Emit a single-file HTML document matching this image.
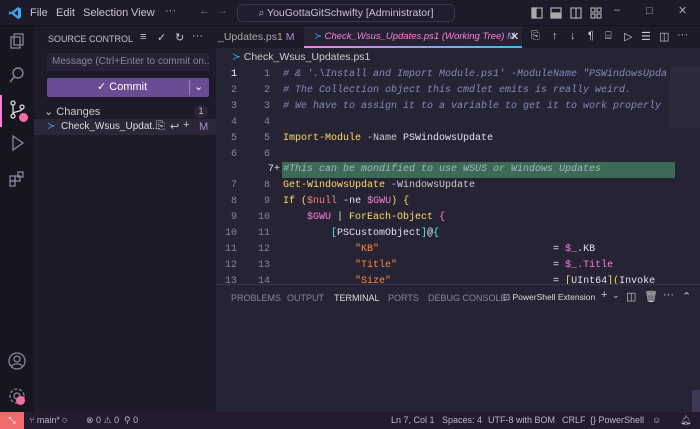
<!DOCTYPE html>
<html><head><meta charset="utf-8"><style>
*{margin:0;padding:0;box-sizing:border-box}
body{width:700px;height:429px;overflow:hidden;background:#262335;font-family:"Liberation Sans",sans-serif;font-size:11px;color:#c8c3d4;position:relative}
.abs{position:absolute;white-space:nowrap}
.title{left:0;top:0;width:700px;height:26px;background:#1e1a29;border-bottom:1px solid #15121d}
.act{left:0;top:26px;width:34px;height:386px;background:#171520}
.side{left:34px;top:26px;width:182px;height:386px;background:#1e1a29}
.tabs{left:216px;top:26px;width:484px;height:22px;background:#1e1a29}
.mono{font-family:"Liberation Mono",monospace;font-size:10px}
.ln{position:absolute;left:216px;width:484px;height:16px;line-height:16px;white-space:pre}
.n1{position:absolute;left:0;width:21px;text-align:right;color:#8a849a}
.n2{position:absolute;left:30px;width:24px;text-align:right;color:#8a849a}
.c{position:absolute;left:67px;color:#e6e0f0}
.cm{color:#848bbd;font-style:italic}
.kw{color:#fede5d}
.pk{color:#ff7edb}
.or{color:#f97e72}
.st{color:#ff8b39}
.bl{color:#36f9f6}
.status{left:0;top:412px;width:700px;height:17px;background:#241b2f;color:#bdb6c9;font-size:9px;line-height:17px}
.panel{left:216px;top:284px;width:484px;height:128px;background:#262335;border-top:1px solid #3a3448}
.ic{position:absolute;color:#ccc;font-size:11px}
</style></head><body>
<div class="abs title">
 <svg class="abs" style="left:8px;top:6px" width="14" height="14" viewBox="0 0 14 14"><path d="M10 1 L13 2.5 V11.5 L10 13 L3 7.5 L1 9 V5 L3 6.5 Z M10 4 L6 7 L10 10 Z" fill="#3da8f5"/></svg>
 <span class="abs" style="left:30px;top:7px">File</span><span class="abs" style="left:56px;top:7px">Edit</span><span class="abs" style="left:83px;top:7px">Selection</span><span class="abs" style="left:131px;top:7px">View</span><span class="abs" style="left:165px;top:5px">···</span>
 <span class="abs" style="left:199px;top:5px;color:#777">←</span><span class="abs" style="left:217px;top:5px;color:#555">→</span>
 <div class="abs" style="left:237px;top:4px;width:218px;height:18px;border:1px solid #3a3448;border-radius:5px;background:#221d2e;text-align:center;line-height:16px;font-size:10.5px">⌕ YouGottaGitSchwifty [Administrator]</div>
 <svg class="abs" style="left:531px;top:7px" width="80" height="12" fill="none" stroke="#aaa" stroke-width="1.2"><rect x="1" y="1" width="10" height="10"/><rect x="1" y="1" width="4" height="10" fill="#aaa"/><rect x="20" y="1" width="10" height="10"/><rect x="20" y="6" width="10" height="5" fill="#aaa"/><rect x="40" y="1" width="10" height="10"/><path d="M45 1V11"/><rect x="60" y="1" width="4" height="4"/><rect x="60" y="7" width="4" height="4"/><rect x="66" y="1" width="4" height="4"/><rect x="66" y="7" width="4" height="4"/></svg>
 <span class="abs" style="left:614px;top:4px;color:#aaa">–</span><span class="abs" style="left:646px;top:5px;color:#aaa">□</span><span class="abs" style="left:678px;top:4px;color:#aaa">✕</span>
</div>
<div class="abs act">
 <div class="abs" style="left:0;top:69px;width:2px;height:32px;background:#ff7edb"></div>
 <svg class="abs" style="left:8px;top:6px" width="18" height="18" fill="none" stroke="#8a849a" stroke-width="1.3"><rect x="6" y="2" width="9" height="11"/><rect x="3" y="5" width="9" height="11"/></svg>
 <svg class="abs" style="left:8px;top:40px" width="18" height="18" fill="none" stroke="#8a849a" stroke-width="1.4"><circle cx="10" cy="7" r="5"/><path d="M6.5 10.5L2 16"/></svg>
 <svg class="abs" style="left:8px;top:74px" width="20" height="20" fill="none" stroke="#ddd" stroke-width="1.3"><circle cx="5" cy="3" r="2"/><circle cx="5" cy="16" r="2"/><circle cx="14" cy="7" r="2"/><path d="M5 5V14M14 9C14 12 5 11 5 14"/></svg>
 <div class="abs" style="left:19px;top:87px;width:9px;height:9px;border-radius:50%;background:#f06ea0"></div>
 <svg class="abs" style="left:8px;top:108px" width="18" height="18" fill="none" stroke="#8a849a" stroke-width="1.3"><path d="M5 2L15 9L5 16Z"/></svg>
 <svg class="abs" style="left:8px;top:144px" width="18" height="18" fill="none" stroke="#8a849a" stroke-width="1.3"><rect x="2" y="6" width="5" height="5"/><rect x="7" y="6" width="5" height="5"/><rect x="2" y="11" width="5" height="5"/><rect x="10" y="2" width="5" height="5"/></svg>
 <svg class="abs" style="left:7px;top:325px" width="20" height="20" fill="none" stroke="#8a849a" stroke-width="1.3"><circle cx="10" cy="10" r="8"/><circle cx="10" cy="8" r="3"/><path d="M4.5 15.5C6 12 14 12 15.5 15.5"/></svg>
 <svg class="abs" style="left:7px;top:360px" width="20" height="20" fill="none" stroke="#8a849a" stroke-width="1.3"><circle cx="10" cy="10" r="3"/><circle cx="10" cy="10" r="7" stroke-dasharray="3 2"/></svg>
 <div class="abs" style="left:16px;top:370px;width:9px;height:9px;border-radius:50%;background:#f06ea0"></div>
</div>
<div class="abs side">
 <span class="abs" style="left:14px;top:8px;font-size:9px">SOURCE CONTROL</span>
 <span class="ic" style="left:106px;top:5px">≡</span><span class="ic" style="left:123px;top:5px">✓</span><span class="ic" style="left:141px;top:5px">↻</span><span class="ic" style="left:158px;top:4px">···</span>
 <div class="abs" style="left:13px;top:27px;width:162px;height:18px;background:#262335;color:#8a849a;font-size:10px;line-height:18px;padding-left:5px;overflow:hidden">Message (Ctrl+Enter to commit on...</div>
 <div class="abs" style="left:13px;top:52px;width:162px;height:19px;background:#6a4c94;color:#fff;line-height:19px;border-radius:2px"><span style="position:absolute;left:50px">✓ Commit</span><span style="position:absolute;left:142px;top:2px;height:15px;border-left:1px solid #9a80c0"></span><span style="position:absolute;left:147px">⌄</span></div>
 <span class="abs" style="left:10px;top:79px;color:#ccc">⌄ Changes</span>
 <div class="abs" style="left:160px;top:79px;width:14px;height:13px;border-radius:7px;background:#2c2638;font-size:9px;text-align:center;line-height:13px">1</div>
 <div class="abs" style="left:0;top:93px;width:182px;height:16px;background:#2b2638"></div>
 <span class="abs" style="left:13px;top:95px;color:#3da8f5;font-size:10px">≻</span>
 <span class="abs" style="left:27px;top:95px;color:#ddd;font-size:10px">Check_Wsus_Updat...</span>
 <span class="ic" style="left:122px;top:94px">⎘</span><span class="ic" style="left:136px;top:94px">↩</span><span class="ic" style="left:149px;top:93px">+</span><span class="abs" style="left:165px;top:95px;color:#a58fd0">M</span>
</div>
<div class="abs tabs">
 <span class="abs" style="left:2px;top:5px;color:#aaa;font-size:10.5px">_Updates.ps1 <span style="color:#a58fd0">M</span></span>
 <div class="abs" style="left:88px;top:0;width:218px;height:22px;background:#262335"></div>
 <div class="abs" style="left:88px;top:20px;width:218px;height:2px;background:linear-gradient(90deg,#ff7edb,#36c2f6)"></div>
 <span class="abs" style="left:98px;top:5px;color:#ff7edb;font-style:italic;font-size:9.5px"><span style="color:#3da8f5;font-style:normal">≻</span> Check_Wsus_Updates.ps1 (Working Tree) <span style="color:#a58fd0">M</span></span>
 <span class="abs" style="left:294px;top:4px;color:#eee">✕</span>
 <span class="ic" style="left:315px;top:4px">⎘</span><span class="ic" style="left:336px;top:4px">↑</span><span class="ic" style="left:354px;top:4px">↓</span><span class="ic" style="left:372px;top:4px">¶</span><span class="ic" style="left:389px;top:4px">⌸</span><span class="ic" style="left:408px;top:4px">▷</span><span class="ic" style="left:425px;top:4px">☰</span><span class="ic" style="left:443px;top:4px">◫</span><span class="ic" style="left:461px;top:3px">···</span>
</div>
<span class="abs" style="left:232px;top:51px;color:#ccc;font-size:10.5px"><span style="color:#3da8f5">≻</span> Check_Wsus_Updates.ps1</span>
<div class="abs" style="left:670px;top:66px;width:30px;height:62px;background:#2e2a3d"></div>
<div class="mono">
<div class="ln" style="top:67px"><span class="n1" style="color:#fff">1</span><span class="n2">1</span><span class="c cm"># &amp; '.\Install and Import Module.ps1' -ModuleName "PSWindowsUpda</span></div>
<div class="ln" style="top:83px"><span class="n1">2</span><span class="n2">2</span><span class="c cm"># The Collection object this cmdlet emits is really weird.</span></div>
<div class="ln" style="top:99px"><span class="n1">3</span><span class="n2">3</span><span class="c cm"># We have to assign it to a variable to get it to work properly</span></div>
<div class="ln" style="top:115px"><span class="n1">4</span><span class="n2">4</span></div>
<div class="ln" style="top:131px"><span class="n1">5</span><span class="n2">5</span><span class="c"><span class="kw">Import-Module</span> <span style="color:#ccc">-Name</span> PSWindowsUpdate</span></div>
<div class="ln" style="top:147px"><span class="n1">6</span><span class="n2">6</span></div>
<div class="ln" style="top:162px"><div style="position:absolute;left:66px;top:0;width:393px;height:16px;background:#3b6a55"></div><span class="n2" style="color:#ddd;left:40px;width:24px">7+</span><span class="c cm" style="color:#a8b0c8">#This can be mondified to use WSUS or Windows Updates</span></div>
<div class="ln" style="top:178px"><span class="n1">7</span><span class="n2">8</span><span class="c"><span class="kw">Get-WindowsUpdate</span> <span style="color:#ccc">-WindowsUpdate</span></span></div>
<div class="ln" style="top:194px"><span class="n1">8</span><span class="n2">9</span><span class="c"><span class="kw">If</span> <span class="kw">(</span><span class="or">$null</span> -ne <span class="pk">$GWU</span><span class="kw">)</span> <span class="kw">{</span></span></div>
<div class="ln" style="top:210px"><span class="n1">9</span><span class="n2">10</span><span class="c">    <span class="pk">$GWU</span> | <span style="color:#fede5d">ForEach-Object</span> <span class="pk">{</span></span></div>
<div class="ln" style="top:226px"><span class="n1">10</span><span class="n2">11</span><span class="c">        <span class="bl">[</span>PSCustomObject<span class="bl">]</span>@<span class="bl">{</span></span></div>
<div class="ln" style="top:242px"><span class="n1">11</span><span class="n2">12</span><span class="c">            <span class="st">"KB"</span>                             = <span class="pk">$_</span>.KB</span></div>
<div class="ln" style="top:258px"><span class="n1">12</span><span class="n2">13</span><span class="c">            <span class="st">"Title"</span>                          = <span class="pk">$_</span><span class="pk">.Title</span></span></div>
<div class="ln" style="top:274px;height:10px;overflow:hidden"><span class="n1">13</span><span class="n2">14</span><span class="c">            <span class="st">"Size"</span>                           = <span class="kw">[</span>UInt64<span class="kw">](</span>Invoke</span></div>
</div>
<div class="abs panel">
 <span class="abs" style="left:15px;top:8px;font-size:9px;color:#8a849a">PROBLEMS</span>
 <span class="abs" style="left:71px;top:8px;font-size:9px;color:#8a849a">OUTPUT</span>
 <span class="abs" style="left:118px;top:8px;font-size:9px;color:#ddd">TERMINAL</span>
 <span class="abs" style="left:172px;top:8px;font-size:9px;color:#8a849a">PORTS</span>
 <span class="abs" style="left:212px;top:8px;font-size:9px;color:#8a849a">DEBUG CONSOLE</span>
 <span class="abs" style="left:287px;top:7px;font-size:8.5px;color:#ddd">⊡ PowerShell Extension</span>
 <span class="ic" style="left:385px;top:4px">+</span><span class="ic" style="left:396px;top:5px;font-size:9px">⌄</span><span class="ic" style="left:410px;top:5px">◫</span><span class="ic" style="left:428px;top:5px">🗑︎</span><span class="ic" style="left:447px;top:4px">···</span><span class="ic" style="left:466px;top:5px">⌃</span>
</div>
<div class="abs" style="left:692px;top:390px;width:8px;height:22px;background:#3e3854"></div>
<div class="abs status">
 <div class="abs" style="left:0;top:0;width:24px;height:17px;background:#f06b6b;color:#fff;text-align:center">⤡</div>
 <span class="abs" style="left:29px">⑂ main* ⟳</span>
 <span class="abs" style="left:86px">⊗ 0 ⚠ 0</span>
 <span class="abs" style="left:124px">⚲ 0</span>
 <span class="abs" style="left:391px">Ln 7, Col 1</span>
 <span class="abs" style="left:442px">Spaces: 4</span>
 <span class="abs" style="left:488px">UTF-8 with BOM</span>
 <span class="abs" style="left:562px">CRLF</span>
 <span class="abs" style="left:590px">{} PowerShell</span>
 <span class="abs" style="left:652px">☺</span><span class="abs" style="left:680px">🔔︎</span>
</div>
</body></html>
